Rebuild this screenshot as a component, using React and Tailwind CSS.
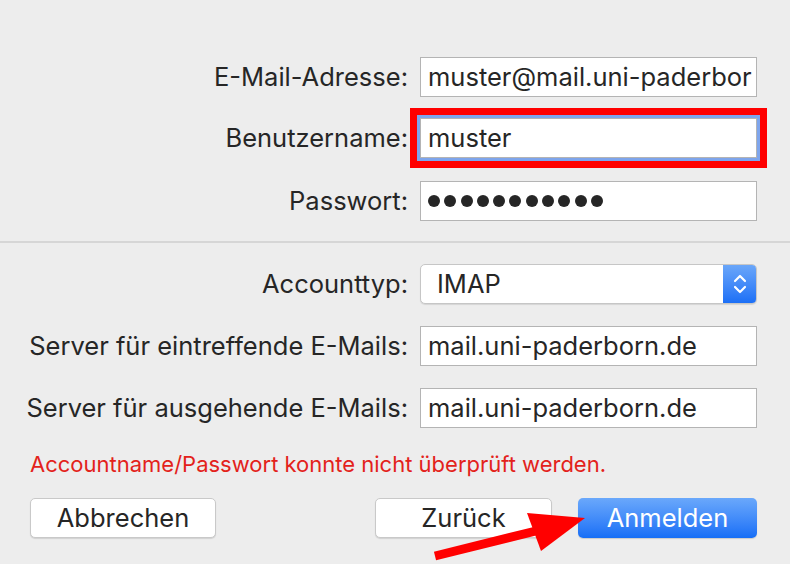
import React from "react";

function Label({ children }) {
  return (
    <div className="w-[420px] shrink-0 pr-[12px] text-right text-[25.5px] leading-none text-[#262626] whitespace-nowrap">
      {children}
    </div>
  );
}

function Field({ children, className = "" }) {
  return (
    <div
      className={`w-[337px] h-[40px] shrink-0 bg-white border border-[#b4b4b4] pl-[7px] flex items-center text-[25.5px] text-[#262626] whitespace-nowrap overflow-hidden ${className}`}
    >
      {children}
    </div>
  );
}

function Btn({ children, className = "" }) {
  return (
    <div
      className={`h-[40px] rounded-[5px] bg-white border border-[#c9c9c9] shadow-[0_1px_1px_rgba(0,0,0,0.12)] flex items-center justify-center text-[25.5px] text-[#262626] ${className}`}
    >
      {children}
    </div>
  );
}

export default function App() {
  return (
    <div className="relative w-[790px] h-[564px] overflow-hidden bg-[#ededed] font-['Inter',sans-serif]">
      <div className="pt-[57px]">
        <div className="flex items-center h-[40px]">
          <Label>E-Mail-Adresse:</Label>
          <Field>muster@mail.uni-paderbor</Field>
        </div>
        <div className="flex items-center h-[40px] mt-[21px]">
          <Label>Benutzername:</Label>
          <Field className="shadow-[0_0_0_3px_#7ea5ec,0_0_0_10px_#ff0000] border-[#7ea5ec]">muster</Field>
        </div>
        <div className="flex items-center h-[40px] mt-[23px]">
          <Label>Passwort:</Label>
          <Field>
            <div className="flex gap-[4.3px]">
              {Array.from({ length: 11 }).map((_, i) => (
                <span key={i} className="block w-[12px] h-[12px] rounded-full bg-[#262626]" />
              ))}
            </div>
          </Field>
        </div>
      </div>

      <div className="mt-[20px] h-[2px] bg-[#d6d6d6]" />

      <div className="pt-[21px]">
        <div className="flex items-center h-[40px]">
          <Label>Accounttyp:</Label>
          <div className="w-[337px] h-[40px] rounded-[5px] bg-white border border-[#c6c6c6] shadow-[0_1px_1px_rgba(0,0,0,0.1)] flex overflow-hidden">
            <div className="flex-1 flex items-center pl-[16px] text-[25.5px] text-[#262626]">IMAP</div>
            <div className="w-[33px] h-full bg-gradient-to-b from-[#6aa6f9] to-[#1b6ff6] flex items-center justify-center">
              <svg width="16" height="24" viewBox="0 0 16 24" fill="none" stroke="white" strokeWidth="2.2" strokeLinecap="round" strokeLinejoin="round">
                <path d="M3 9 L8 4 L13 9" />
                <path d="M3 15 L8 20 L13 15" />
              </svg>
            </div>
          </div>
        </div>
        <div className="flex items-center h-[40px] mt-[22px]">
          <Label>Server für eintreffende E-Mails:</Label>
          <Field>mail.uni-paderborn.de</Field>
        </div>
        <div className="flex items-center h-[40px] mt-[22px]">
          <Label>Server für ausgehende E-Mails:</Label>
          <Field>mail.uni-paderborn.de</Field>
        </div>
      </div>

      <div className="mt-[25px] pl-[30px] h-[22px] flex items-center text-[22px] text-[#e3221b] whitespace-nowrap">
        Accountname/Passwort konnte nicht überprüft werden.
      </div>

      <div className="mt-[23px] flex pl-[30px]">
        <Btn className="w-[186px]">Abbrechen</Btn>
        <Btn className="w-[177px] ml-[159px]">Zurück</Btn>
        <div className="ml-[26px] w-[179px] h-[40px] rounded-[5px] bg-gradient-to-b from-[#6aa8fb] to-[#156ef6] shadow-[0_1px_1px_rgba(0,0,0,0.15)] flex items-center justify-center text-[25.5px] text-white">
          Anmelden
        </div>
      </div>

      <svg className="absolute left-0 top-0 pointer-events-none" width="790" height="564" viewBox="0 0 790 564">
        <line x1="435" y1="556" x2="540" y2="530" stroke="#ff0000" strokeWidth="9" />
        <polygon points="585,518 527,513 541,551" fill="#ff0000" />
      </svg>
    </div>
  );
}
